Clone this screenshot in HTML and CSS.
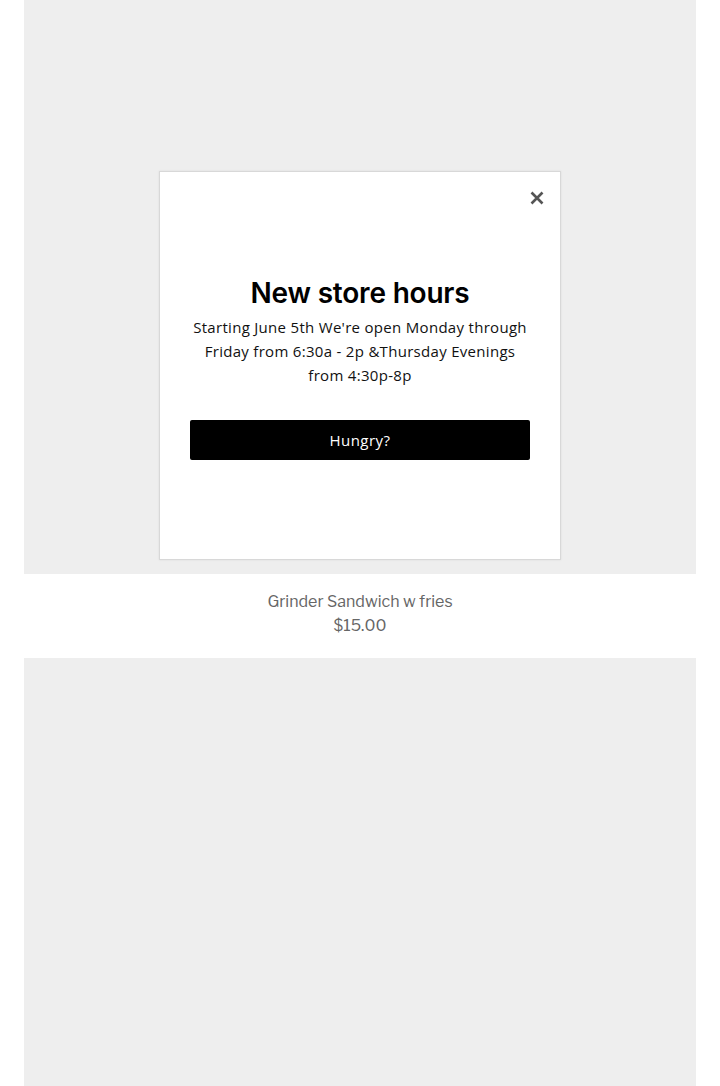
FILE: index.html
```html
<!DOCTYPE html>
<html>
<head>
<meta charset="utf-8">
<link rel="stylesheet" href="styles.css">
</head>
<body>
<main class="grid">
  <article class="product">
    <div class="product-image"></div>
    <div class="product-info">
      <div class="product-title">Grinder Sandwich w fries</div>
      <div class="product-price">$15.00</div>
    </div>
  </article>
  <article class="product">
    <div class="product-image tall"></div>
  </article>
</main>
<div class="popup">
  <button class="popup-close" aria-label="Close">
    <svg width="14" height="14" viewBox="0 0 14 14"><path d="M1.5 1.5L12.5 12.5M12.5 1.5L1.5 12.5" stroke="#555" stroke-width="2.6" stroke-linecap="butt"/></svg>
  </button>
  <h2 class="popup-title">New store hours</h2>
  <p class="popup-text">Starting June 5th We're open Monday through Friday from 6:30a - 2p &amp;Thursday Evenings from 4:30p-8p</p>
  <a class="popup-button">Hungry?</a>
</div>
</body>
</html>
```
FILE: styles.css
```css
html, body {
  margin: 0;
  padding: 0;
  background: #fff;
  overflow: hidden;
}
.grid {
  padding: 0 24px;
  display: flex;
  flex-direction: column;
}
.product-image {
  height: 574px;
  background: #eeeeee;
}
.product-image.tall {
  height: 428px;
}
.product-info {
  padding: 16px 0 20px;
  text-align: center;
  font-family: "Libre Franklin", Lato, "Liberation Sans", sans-serif;
  font-size: 16px;
  line-height: 24px;
  color: #666;
}
.popup {
  position: absolute;
  left: 159px;
  top: 171px;
  width: 340px;
  height: 183px;
  padding: 104px 30px 100px;
  background: #fff;
  border: 1px solid #d8d8d8;
  box-shadow: 0 0 2px rgba(0,0,0,0.08);
  display: flex;
  flex-direction: column;
  align-items: stretch;
  text-align: center;
  font-family: "Open Sans", "Noto Sans", sans-serif;
}
.popup-close {
  position: absolute;
  top: 18px;
  right: 15px;
  width: 16px;
  height: 16px;
  padding: 1px;
  border: 0;
  background: none;
  display: flex;
  align-items: center;
  justify-content: center;
}
.popup-title {
  margin: 0;
  font-family: Inter, "Noto Sans", sans-serif;
  font-weight: 600;
  font-size: 28px;
  line-height: 34px;
  color: #000;
  letter-spacing: -0.2px;
}
.popup-text {
  margin: 5px 0 0;
  font-size: 15px;
  line-height: 24px;
  color: #111;
  letter-spacing: 0.3px;
}
.popup-button {
  margin-top: 33px;
  height: 40px;
  background: #000;
  color: #fff;
  border-radius: 2px;
  font-size: 15px;
  line-height: 40px;
  letter-spacing: 0.5px;
}
```
